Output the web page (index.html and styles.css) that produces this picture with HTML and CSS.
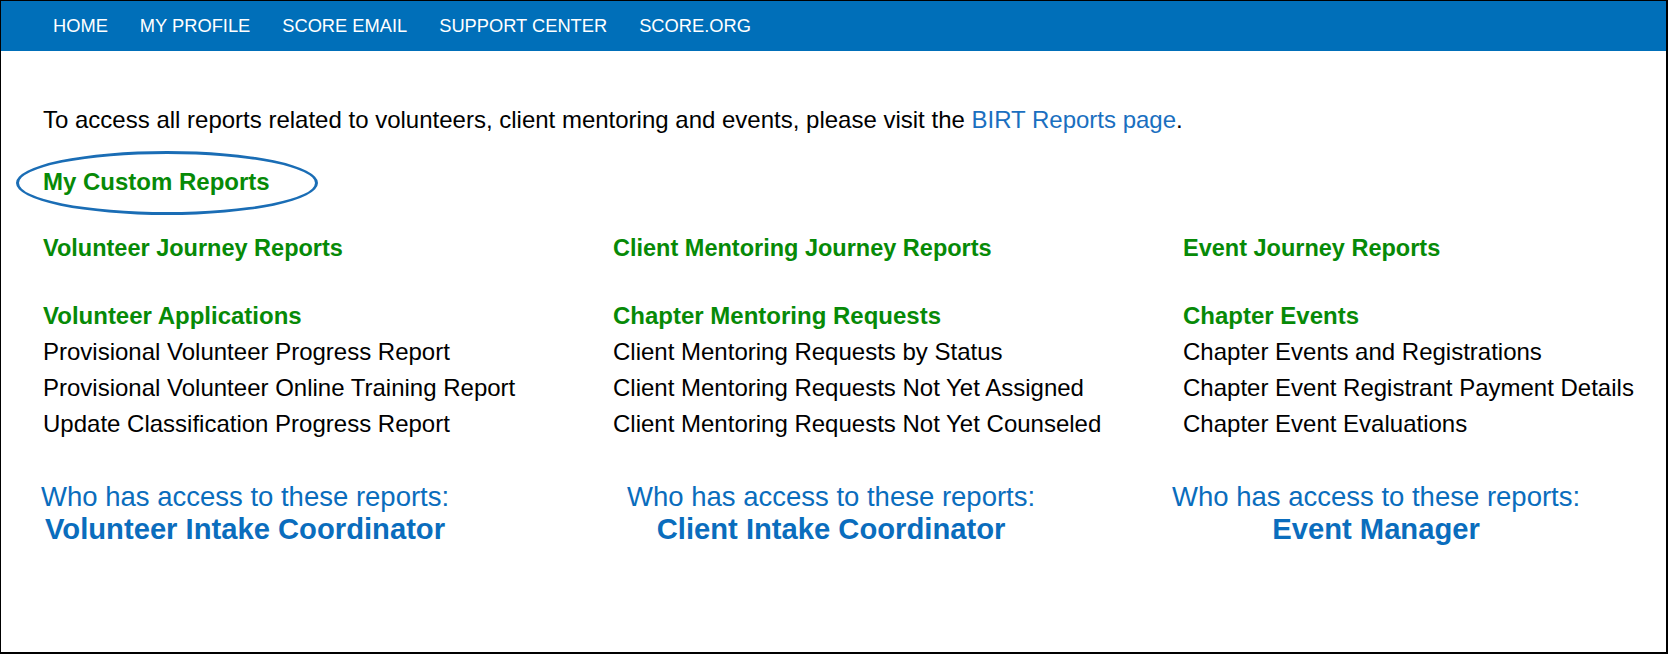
FILE: index.html
```html
<!DOCTYPE html>
<html lang="en">
<head>
  <meta charset="UTF-8">
  <title>My Custom Reports</title>
  <link rel="stylesheet" href="styles.css">
</head>
<body>

<div class="frame">
  <nav class="topnav">
    <a href="#">HOME</a>
    <a href="#">MY PROFILE</a>
    <a href="#">SCORE EMAIL</a>
    <a href="#">SUPPORT CENTER</a>
    <a href="#">SCORE.ORG</a>
  </nav>

  <div class="content">
    <p class="intro">To access all reports related to volunteers, client mentoring and events, please visit the <a href="#">BIRT Reports page</a>.</p>

    <h2 class="custom"><span class="circled">My Custom Reports</span></h2>

    <div class="columns">

      <div class="column">
        <h3>Volunteer Journey Reports</h3>
        <h4>Volunteer Applications</h4>
        <ul class="reports">
          <li>Provisional Volunteer Progress Report</li>
          <li>Provisional Volunteer Online Training Report</li>
          <li>Update Classification Progress Report</li>
        </ul>
        <div class="access access-left">
          <div class="who">Who has access to these reports:</div>
          <div class="role">Volunteer Intake Coordinator</div>
        </div>
      </div>

      <div class="column">
        <h3>Client Mentoring Journey Reports</h3>
        <h4>Chapter Mentoring Requests</h4>
        <ul class="reports">
          <li>Client Mentoring Requests by Status</li>
          <li>Client Mentoring Requests Not Yet Assigned</li>
          <li>Client Mentoring Requests Not Yet Counseled</li>
        </ul>
        <div class="access access-mid">
          <div class="who">Who has access to these reports:</div>
          <div class="role">Client Intake Coordinator</div>
        </div>
      </div>

      <div class="column">
        <h3>Event Journey Reports</h3>
        <h4>Chapter Events</h4>
        <ul class="reports">
          <li>Chapter Events and Registrations</li>
          <li>Chapter Event Registrant Payment Details</li>
          <li>Chapter Event Evaluations</li>
        </ul>
        <div class="access access-right">
          <div class="who">Who has access to these reports:</div>
          <div class="role">Event Manager</div>
        </div>
      </div>

    </div>
  </div>
</div>

</body>
</html>
```

FILE: styles.css
```css
html, body {
  margin: 0;
  padding: 0;
  background-color: #fff;
}

body {
  font-family: "Liberation Sans", Arial, sans-serif;
  overflow: hidden;
}

.frame {
  box-sizing: border-box;
  height: 654px;
  border-top: 1px solid #000;
  border-left: 1px solid #000;
  border-right: 2px solid #000;
  border-bottom: 2px solid #000;
  overflow: hidden;
}

.topnav {
  background-color: #006fb9;
  height: 50px;
  display: flex;
  align-items: center;
  gap: 32px;
  padding-left: 52px;
}

.topnav a {
  color: #fff;
  text-decoration: none;
  font-size: 18.3px;
}

.content {
  padding: 51px 0 0 42px;
}

.intro {
  margin: 0;
  font-size: 24px;
  line-height: 36px;
  color: #000;
}

.intro a {
  color: #1a6fc0;
  text-decoration: none;
}

.custom,
.column h3,
.column h4 {
  margin: 0;
  font-size: 24px;
  line-height: 36px;
  font-weight: bold;
  color: #078a07;
  white-space: nowrap;
}

.column h3 {
  font-size: 23.5px;
}

.custom {
  margin-top: 26px;
}

.circled {
  position: relative;
}

.circled::before {
  content: "";
  position: absolute;
  left: -27px;
  top: -17px;
  width: 302px;
  height: 64px;
  box-sizing: border-box;
  border: 3px solid #1a6db5;
  border-radius: 50%;
}

.columns {
  display: grid;
  grid-template-columns: 570px 570px 1fr;
  margin-top: 30px;
}

.column h4 {
  margin-top: 32px;
}

.reports {
  list-style: none;
  margin: 0;
  padding: 0;
}

.reports li {
  font-size: 24px;
  line-height: 36px;
  color: #000;
  white-space: nowrap;
}

.access {
  display: inline-block;
  margin-top: 39px;
  text-align: center;
  color: #0a6dbd;
  white-space: nowrap;
}

.access-left {
  margin-left: -2px;
}

.access-mid {
  margin-left: 14px;
}

.access-right {
  margin-left: -11px;
}

.who {
  font-size: 27.5px;
  line-height: 32px;
}

.role {
  font-size: 29.2px;
  line-height: 32px;
  font-weight: bold;
}
```
